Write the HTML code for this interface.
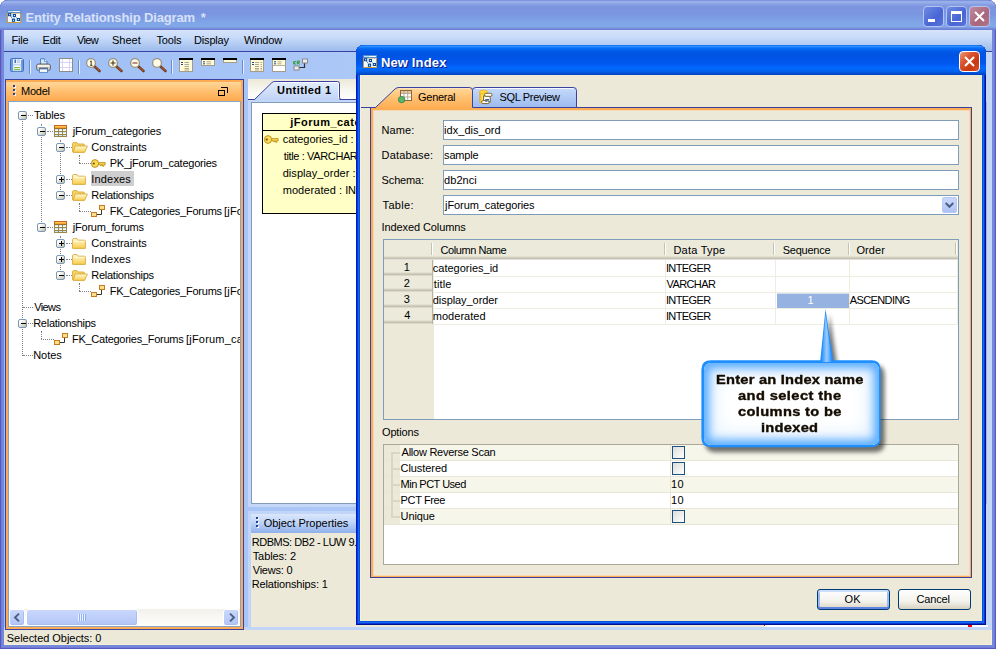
<!DOCTYPE html>
<html><head><meta charset="utf-8"><title>Entity Relationship Diagram</title>
<style>
*{box-sizing:border-box;margin:0;padding:0}
html,body{width:996px;height:649px;overflow:hidden;background:#fff}
body{font-family:"Liberation Sans",sans-serif;font-size:11px;color:#000;position:relative}
.a{position:absolute}
.t{position:absolute;white-space:nowrap;line-height:14px;height:14px;transform-origin:0 0}
svg{position:absolute;overflow:visible}
#win{left:0;top:0;width:996px;height:649px;background:#6E88DC;border-radius:8px 8px 0 0;overflow:hidden;box-shadow:inset 0 0 0 1px #5359C1,inset 0 0 0 2px #7579D3,inset 0 0 0 3px #7789DC}
#title{left:0;top:0;width:996px;height:30px;background:linear-gradient(#6A82D6 0,#90A8E8 1px,#9DB3EA 2px,#8AA2E4 4px,#7C94DF 7px,#7A96E0 14px,#7EA0E5 20px,#82AAEA 26px,#7B98E0 28px,#6E80D4 29px,#6E80D4 30px)}
#menubar{left:4px;top:30px;width:988px;height:21px;background:linear-gradient(#D6E4FB,#C5D9F8 40%,#9DBBED)}
#menuline{left:4px;top:51px;width:988px;height:1px;background:#3A41A2}
#client{left:4px;top:52px;width:988px;height:578px;background:linear-gradient(90deg,#9EBEF5,#C4DAFA)}
#status{left:4px;top:630px;width:988px;height:15px;background:#ECE9D8;border-right:1px solid #F7F1D9;border-bottom:1px solid #F7F1D9}
.cb{width:21px;height:21px;top:6px;border-radius:4px;border:1px solid #B5C4EE}
.sep{width:2px;height:14px;top:60px;border-left:1px solid #6A8CCB;border-right:1px solid #E4EEFC}
.inp{height:20px;background:#fff;border:1px solid #7F9DB9}
.exp{width:9px;height:9px;border:1px solid #7898B5;border-radius:2px;background:linear-gradient(135deg,#fff 20%,#C3BAAA)}
.exp i{position:absolute;left:2px;top:3px;width:5px;height:1px;background:#000}
.exp b{position:absolute;left:4px;top:1px;width:1px;height:5px;background:#000}
.dh{border-top:1px dotted #808080;height:0}
.dv{border-left:1px dotted #808080;width:0}
.sb{height:17px;border:1px solid #fff;border-radius:3px;background:linear-gradient(#C9D7FC,#BDCEF9 55%,#B1C5F5);box-shadow:inset -1px -1px 0 #A9BDEE}
.chk{width:13px;height:13px;border:1px solid #1C5180;background:linear-gradient(135deg,#DCDCD7,#fff)}
.btn{height:21px;border:1px solid #003C74;border-radius:3px;background:linear-gradient(#fff,#F3F2EC 60%,#D8D2C0)}
</style></head><body>
<div id="win" class="a">
<div id="title" class="a"></div>
<div id="menubar" class="a"></div>
<div id="menuline" class="a"></div>
<div id="client" class="a"></div>
<div id="status" class="a"></div>
<div class="a" style="left:4px;top:627px;width:988px;height:3px;background:#C4D7F8"></div>
<!-- app icon -->
<svg style="left:7px;top:10px" width="14" height="13" viewBox="0 0 14 13"><rect x=".5" y="3" width="13" height="9.5" fill="#F2F9FF" stroke="#C89A3A"/><rect x="0" y="0" width="14" height="3" fill="#5B8FD0"/><rect x="1" y="1" width="12" height="1" fill="#BFE3F8"/><rect x="6" y="1" width="7" height="1" fill="#F4FAFE"/><path d="M2.5 4.5 L6.5 10.4 M7.4 5.5 L11.4 9.5 M6.5 10.4 L7.4 5.5" stroke="#0A4A9A" stroke-width=".9" stroke-dasharray="1 .7" fill="none"/><g fill="#0A4A9A"><rect x="1" y="3.2" width="3.2" height="3"/><rect x="5.8" y="4" width="3.2" height="3"/><rect x="4.9" y="8.8" width="3.2" height="3"/><rect x="9.8" y="8" width="3.2" height="3"/></g><g fill="#fff"><rect x="2.1" y="4.2" width="1" height="1"/><rect x="6.9" y="5" width="1" height="1"/><rect x="6" y="9.8" width="1" height="1"/><rect x="10.9" y="9" width="1" height="1"/></g></svg>
<!-- caption buttons -->
<div class="a cb" style="left:923px;background:linear-gradient(135deg,#6F8BE4,#4866D4 60%,#5874DC)"><div class="a" style="left:4px;top:12px;width:7px;height:3px;background:#fff"></div></div>
<div class="a cb" style="left:946px;background:linear-gradient(135deg,#6F8BE4,#4866D4 60%,#5874DC)"><div class="a" style="left:4px;top:4px;width:11px;height:11px;border:1px solid #fff;border-top-width:3px"></div></div>
<div class="a cb" style="left:969px;background:linear-gradient(135deg,#C08A9C,#A9667C 60%,#B27488)"><svg style="left:4px;top:4px" width="11" height="11" viewBox="0 0 11 11"><path d="M1 1 L10 10 M10 1 L1 10" stroke="#fff" stroke-width="2"/></svg></div>
<div class="t" style="left:25.4px;top:11px;letter-spacing:-0.14px;font-size:13px;font-weight:bold;color:#D8E1F8;">Entity Relationship Diagram</div>
<div class="t" style="left:200.7px;top:11px;font-size:13px;font-weight:bold;color:#D8E1F8;">*</div>
<div class="t" style="left:11.5px;top:33px;letter-spacing:-0.17px;">File</div>
<div class="t" style="left:42.6px;top:33px;letter-spacing:-0.27px;">Edit</div>
<div class="t" style="left:76.9px;top:33px;letter-spacing:-0.60px;">View</div>
<div class="t" style="left:112.0px;top:33px;">Sheet</div>
<div class="t" style="left:156.5px;top:33px;letter-spacing:-0.20px;">Tools</div>
<div class="t" style="left:194.0px;top:33px;letter-spacing:-0.17px;">Display</div>
<div class="t" style="left:244.0px;top:33px;letter-spacing:-0.20px;">Window</div>
<div class="t" style="left:6.8px;top:631px;letter-spacing:-0.04px;">Selected Objects: 0</div>

<!-- toolbar icons -->
<svg style="left:10px;top:58px" width="14" height="14" viewBox="0 0 14 14"><path d="M.5 1.5 Q.5 .5 1.5 .5 H12 L13.5 2 V12.5 Q13.5 13.5 12.5 13.5 H1.5 Q.5 13.5 .5 12.5Z" fill="#DCE9FA" stroke="#3F6FC0"/><rect x="1" y="1" width="2" height="12" fill="#6C99DC"/><rect x="11" y="2" width="2" height="11" fill="#6C99DC"/><rect x="3" y="1" width="8" height="5" fill="#E8F0FC"/><rect x="4.5" y="1.5" width="1.5" height="3.5" fill="#3F6FC0"/><rect x="7" y="1.5" width="3" height="3.5" fill="#BFD1EE"/><rect x="3" y="7" width="8" height="6" fill="#fff" stroke="#8FB0E4" stroke-width=".6"/><rect x="4" y="9" width="6" height="1.2" fill="#7DBB4C"/><rect x="4" y="11" width="6" height="1.2" fill="#7DBB4C"/></svg>
<div class="a sep" style="left:29px"></div>
<svg style="left:36px;top:58px" width="15" height="15" viewBox="0 0 15 15"><path d="M4.5 6.5 V.8 H8.5 L11 3.5 V6.5Z" fill="#D6E6F8" stroke="#3E78C4" stroke-width=".9"/><path d="M8.5 .8 V3.5 H11" fill="#fff" stroke="#3E78C4" stroke-width=".7"/><rect x=".6" y="6" width="13.8" height="6.5" rx="2" fill="#C9C9C9" stroke="#5A5A5A" stroke-width=".9"/><rect x="1.5" y="7" width="12" height="2" fill="#F2F2F2"/><rect x="3" y="9.5" width="9" height="2.2" fill="#6E6E6E"/><rect x="3.5" y="11" width="8" height="3.3" fill="#fff" stroke="#3E78C4" stroke-width=".8"/></svg>
<svg style="left:59px;top:58px" width="14" height="14" viewBox="0 0 14 14"><rect x=".5" y=".5" width="13" height="13" fill="#fff" stroke="#8C8C8C"/><path d="M3.5 1 V13 M10.5 1 V13 M1 4.5 H13 M1 9.5 H13" stroke="#D6D2F8" stroke-width="1"/></svg>
<div class="a sep" style="left:78px"></div>
<svg style="left:85px;top:57px" width="18" height="17" viewBox="0 0 18 17"><g id="mag"><path d="M9.5 9.5 L14.5 14" stroke="#6B3A1E" stroke-width="2.6" stroke-linecap="round"/><path d="M10.5 10.4 L14.3 13.8" stroke="#C86A3A" stroke-width="1.3" stroke-dasharray="1 .6"/><circle cx="6" cy="6" r="4.4" fill="#FFFBE6" stroke="#98917E" stroke-width="1.3"/></g><path d="M5 4.8 L6.2 3.8 V8.3 M5 8.3 H7.4" stroke="#4A3B1E" stroke-width="1" fill="none"/></svg>
<svg style="left:107px;top:57px" width="18" height="17" viewBox="0 0 18 17"><use href="#mag"/><path d="M3.5 6 H8.5 M6 3.5 V8.5" stroke="#4A3B1E" stroke-width="1.2"/></svg>
<svg style="left:129px;top:57px" width="18" height="17" viewBox="0 0 18 17"><use href="#mag"/><path d="M3.5 6 H8.5" stroke="#7A2B2B" stroke-width="1.2"/></svg>
<svg style="left:151px;top:57px" width="18" height="17" viewBox="0 0 18 17"><use href="#mag"/></svg>
<div class="a sep" style="left:171px"></div>
<svg style="left:179px;top:58px" width="14" height="14" viewBox="0 0 14 14"><rect x=".5" y="1.5" width="13" height="12" fill="#FFFBD6" stroke="#A39C8B"/><rect x="0" y="0" width="14" height="2" fill="#000"/><path d="M2 4.5 H4 M2 6.5 H4" stroke="#1E4AA0"/><path d="M5.5 4.5 H10 M5.5 6.5 H10 M5.5 8.5 H10 M5.5 10.5 H10 M5.5 12 H10" stroke="#9A927A" stroke-width=".8"/></svg>
<svg style="left:201px;top:58px" width="14" height="8" viewBox="0 0 14 8"><rect x=".5" y="1.5" width="13" height="6" fill="#FFFBD6" stroke="#A39C8B"/><rect x="0" y="0" width="14" height="2" fill="#000"/><path d="M2 3.8 H4 M2 5.8 H4" stroke="#1E4AA0"/><path d="M5.5 3.8 H10 M5.5 5.8 H10" stroke="#9A927A" stroke-width=".8"/></svg>
<svg style="left:223px;top:58px" width="14" height="5" viewBox="0 0 14 5"><rect x=".5" y="1.5" width="13" height="3" fill="#FFFBD6" stroke="#A39C8B"/><rect x="0" y="0" width="14" height="2" fill="#000"/></svg>
<div class="a sep" style="left:242px"></div>
<svg style="left:250px;top:58px" width="14" height="14" viewBox="0 0 14 14"><rect x=".5" y="1.5" width="13" height="12" fill="#FFFBD6" stroke="#A39C8B"/><rect x="0" y="0" width="14" height="2" fill="#000"/><path d="M2 4.5 H4 M2 6.5 H4" stroke="#1E4AA0"/><path d="M5 4.5 H9 M5 6.5 H9 M5 8.5 H9 M5 10.5 H9 M5 12 H9 M10.5 4.5 H12 M10.5 6.5 H12 M10.5 8.5 H12 M10.5 10.5 H12 M10.5 12 H12" stroke="#9A927A" stroke-width=".8"/></svg>
<svg style="left:272px;top:58px" width="14" height="14" viewBox="0 0 14 14"><rect x=".5" y="1.5" width="13" height="12" fill="#fff" stroke="#A39C8B"/><rect x="1" y="2" width="12" height="5.5" fill="#FFFBD6"/><path d="M1 7.5 H13" stroke="#A39C8B" stroke-width=".8"/><rect x="0" y="0" width="14" height="2" fill="#000"/><path d="M2 3.8 H4 M2 5.8 H4" stroke="#1E4AA0"/><path d="M5.5 3.8 H9.5 M5.5 5.8 H9.5" stroke="#9A927A" stroke-width=".8"/></svg>
<svg style="left:293px;top:58px" width="16" height="13" viewBox="0 0 16 13"><path d="M4 9.5 H11.5 V4" stroke="#333" stroke-width="1.2" fill="none"/><rect x="9.5" y="1" width="5" height="4" fill="#ECECEC" stroke="#8A8A8A"/><rect x="1" y="8" width="5" height="4" fill="#ECECEC" stroke="#8A8A8A"/><path d="M.8 3 V6.5 M.8 4.8 L3 3 M.8 4.8 L3 6.5 M4.3 6.5 V3 H6.3 V4.7 H4.3 M5.3 4.7 L6.5 6.5" stroke="#2E9A2E" stroke-width="1" fill="none"/></svg>

<!-- model panel -->
<div class="a" style="left:5px;top:79px;width:239px;height:551px;background:#FDAB52;border:1px solid #3A41A2"></div>
<div class="a" style="left:6px;top:82px;width:235px;height:19px;background:linear-gradient(#FFD798,#FFC173 45%,#FFA94E)"></div>
<div class="a" style="left:8px;top:101px;width:233px;height:526px;background:#fff;border:1px solid #86A4C6"></div>
<div class="a" style="left:14px;top:86px;width:2px;height:2px;background:#fff;opacity:.85"></div><div class="a" style="left:13px;top:85px;width:2px;height:2px;background:#27438F"></div>
<div class="a" style="left:14px;top:90px;width:2px;height:2px;background:#fff;opacity:.85"></div><div class="a" style="left:13px;top:89px;width:2px;height:2px;background:#27438F"></div>
<div class="a" style="left:14px;top:94px;width:2px;height:2px;background:#fff;opacity:.85"></div><div class="a" style="left:13px;top:93px;width:2px;height:2px;background:#27438F"></div>
<svg style="left:218px;top:87px" width="11" height="10" viewBox="0 0 11 10"><path d="M3 .5 H9.5 V6" stroke="#000" fill="none"/><rect x=".5" y="3.5" width="6" height="5" fill="none" stroke="#000"/></svg>
<div class="t" style="left:21.0px;top:84px;letter-spacing:-0.25px;">Model</div>
<svg width="0" height="0"><defs>
<linearGradient id="gf" x1="0" y1="0" x2="0" y2="1"><stop offset="0" stop-color="#FFFBDA"/><stop offset="1" stop-color="#F6CC4C"/></linearGradient>
<symbol id="i-table" viewBox="0 0 13 12"><rect x="0" y="0" width="13" height="12" fill="#9A8648"/><rect x="0" y="0" width="13" height="1" fill="#C4661E"/><rect x="0" y="1" width="1" height="3" fill="#B06A22"/><rect x="12" y="1" width="1" height="3" fill="#B06A22"/><rect x="1" y="1" width="11" height="2" fill="#F6A530"/><rect x="1" y="1" width="11" height="1" fill="#FFC455"/><rect x="1" y="3" width="11" height="1" fill="#A8701E"/><rect x="1" y="4" width="3" height="2" fill="#fff"/><rect x="1" y="4" width="3" height="1" fill="#CFE8FA"/><rect x="1" y="7" width="3" height="2" fill="#fff"/><rect x="1" y="7" width="3" height="1" fill="#CFE8FA"/><rect x="1" y="10" width="3" height="1" fill="#fff"/><rect x="1" y="10" width="3" height="1" fill="#CFE8FA"/><rect x="5" y="4" width="3" height="2" fill="#fff"/><rect x="5" y="4" width="3" height="1" fill="#CFE8FA"/><rect x="5" y="7" width="3" height="2" fill="#fff"/><rect x="5" y="7" width="3" height="1" fill="#CFE8FA"/><rect x="5" y="10" width="3" height="1" fill="#fff"/><rect x="5" y="10" width="3" height="1" fill="#CFE8FA"/><rect x="9" y="4" width="3" height="2" fill="#fff"/><rect x="9" y="4" width="3" height="1" fill="#CFE8FA"/><rect x="9" y="7" width="3" height="2" fill="#fff"/><rect x="9" y="7" width="3" height="1" fill="#CFE8FA"/><rect x="9" y="10" width="3" height="1" fill="#fff"/><rect x="9" y="10" width="3" height="1" fill="#CFE8FA"/></symbol>
<symbol id="i-fopen" viewBox="0 0 16 11"><path d="M.6 10 V1.6 Q.6 .6 1.6 .6 H5 L6.2 2 H11.4 Q12.4 2 12.4 3 V4" fill="#F5D264" stroke="#D9A93A" stroke-width=".9"/><path d="M1 10.4 L3.4 4 H15.4 L12.6 10.4Z" fill="url(#gf)" stroke="#D9A93A" stroke-width=".9"/></symbol>
<symbol id="i-fclosed" viewBox="0 0 14 11"><path d="M.6 10.4 V1.6 Q.6 .6 1.6 .6 H5 L6.2 2.2 H12.4 Q13.4 2.2 13.4 3.2 V10.4Z" fill="url(#gf)" stroke="#D9A93A" stroke-width=".9"/><path d="M1.2 3.3 H12.8" stroke="#FFFBDA" stroke-width=".9"/></symbol>
<symbol id="i-key" viewBox="0 0 15 9"><path d="M6 3.6 H14.2 V5.6 H13 V7.2 H11.4 V5.6 H10.4 V6.6 H9 V5.6 H6Z" fill="#F7D54A" stroke="#B88A18" stroke-width=".8"/><ellipse cx="4" cy="4.5" rx="3.6" ry="3.9" fill="#F9DC5A" stroke="#B88A18" stroke-width=".9"/><circle cx="2.8" cy="4.5" r="1.1" fill="#6B4A10"/></symbol>
<symbol id="i-fk" viewBox="0 0 15 12"><path d="M5 9.5 H10.5 V4" stroke="#333" stroke-width="1" fill="none"/><rect x="8.5" y=".5" width="5" height="4" fill="#FFE08A" stroke="#C87A1E"/><rect x=".5" y="7.5" width="5" height="4" fill="#FFE08A" stroke="#C87A1E"/></symbol>
</defs></svg>

<div class="a" style="left:0;top:0;width:240px;height:609px;overflow:hidden">
<div class="a" style="left:91px;top:171px;width:43px;height:15px;background:#CFCFCF"></div>
<div class="a dv" style="left:22px;top:121px;height:235px"></div>
<div class="a dh" style="left:28px;top:115px;width:5px"></div>
<div class="a dh" style="left:28px;top:323px;width:5px"></div>
<div class="a dh" style="left:23px;top:307px;width:10px"></div>
<div class="a dh" style="left:23px;top:355px;width:10px"></div>
<div class="a dv" style="left:41px;top:124px;height:104px"></div>
<div class="a dh" style="left:47px;top:131px;width:6px"></div>
<div class="a dh" style="left:47px;top:227px;width:6px"></div>
<div class="a dv" style="left:60px;top:140px;height:56px"></div>
<div class="a dv" style="left:60px;top:236px;height:40px"></div>
<div class="a dh" style="left:66px;top:147px;width:6px"></div>
<div class="a dh" style="left:66px;top:179px;width:6px"></div>
<div class="a dh" style="left:66px;top:195px;width:6px"></div>
<div class="a dh" style="left:66px;top:243px;width:6px"></div>
<div class="a dh" style="left:66px;top:259px;width:6px"></div>
<div class="a dh" style="left:66px;top:275px;width:6px"></div>
<div class="a dv" style="left:79px;top:155px;height:8px"></div>
<div class="a dh" style="left:79px;top:163px;width:12px"></div>
<div class="a dv" style="left:79px;top:203px;height:8px"></div>
<div class="a dh" style="left:79px;top:211px;width:12px"></div>
<div class="a dv" style="left:79px;top:283px;height:8px"></div>
<div class="a dh" style="left:79px;top:291px;width:12px"></div>
<div class="a dv" style="left:41px;top:331px;height:8px"></div>
<div class="a dh" style="left:41px;top:339px;width:13px"></div>
<div class="a exp" style="left:18px;top:111px"><i></i></div>
<div class="a exp" style="left:18px;top:319px"><i></i></div>
<div class="a exp" style="left:37px;top:127px"><i></i></div>
<div class="a exp" style="left:37px;top:223px"><i></i></div>
<div class="a exp" style="left:56px;top:143px"><i></i></div>
<div class="a exp" style="left:56px;top:175px"><i></i><b></b></div>
<div class="a exp" style="left:56px;top:191px"><i></i></div>
<div class="a exp" style="left:56px;top:239px"><i></i><b></b></div>
<div class="a exp" style="left:56px;top:255px"><i></i><b></b></div>
<div class="a exp" style="left:56px;top:271px"><i></i></div>
<svg style="left:54px;top:125px" width="13" height="12"><use href="#i-table" width="13" height="12"/></svg>
<svg style="left:54px;top:221px" width="13" height="12"><use href="#i-table" width="13" height="12"/></svg>
<svg style="left:72px;top:142px" width="16" height="11"><use href="#i-fopen" width="16" height="11"/></svg>
<svg style="left:72px;top:190px" width="16" height="11"><use href="#i-fopen" width="16" height="11"/></svg>
<svg style="left:72px;top:270px" width="16" height="11"><use href="#i-fopen" width="16" height="11"/></svg>
<svg style="left:72px;top:174px" width="14" height="11"><use href="#i-fclosed" width="14" height="11"/></svg>
<svg style="left:72px;top:238px" width="14" height="11"><use href="#i-fclosed" width="14" height="11"/></svg>
<svg style="left:72px;top:254px" width="14" height="11"><use href="#i-fclosed" width="14" height="11"/></svg>
<svg style="left:91px;top:159px" width="15" height="9"><use href="#i-key" width="15" height="9"/></svg>
<svg style="left:91px;top:205px" width="15" height="12"><use href="#i-fk" width="15" height="12"/></svg>
<svg style="left:91px;top:285px" width="15" height="12"><use href="#i-fk" width="15" height="12"/></svg>
<svg style="left:54px;top:333px" width="15" height="12"><use href="#i-fk" width="15" height="12"/></svg>
<div class="t" style="left:33.9px;top:108px;letter-spacing:-0.12px;">Tables</div>
<div class="t" style="left:72.8px;top:124px;letter-spacing:-0.17px;">jForum_categories</div>
<div class="t" style="left:91.3px;top:140px;letter-spacing:-0.02px;">Constraints</div>
<div class="t" style="left:109.7px;top:156px;letter-spacing:-0.24px;">PK_jForum_categories</div>
<div class="t" style="left:91.3px;top:172px;letter-spacing:0.17px;">Indexes</div>
<div class="t" style="left:91.3px;top:188px;letter-spacing:-0.27px;">Relationships</div>
<div class="t" style="left:109.7px;top:204px;letter-spacing:-0.23px;">FK_Categories_Forums</div>
<div class="t" style="left:224.0px;top:204px;letter-spacing:0.20px;">[jForum_categories]</div>
<div class="t" style="left:72.8px;top:220px;letter-spacing:-0.23px;">jForum_forums</div>
<div class="t" style="left:91.3px;top:236px;letter-spacing:-0.02px;">Constraints</div>
<div class="t" style="left:91.3px;top:252px;letter-spacing:0.17px;">Indexes</div>
<div class="t" style="left:91.3px;top:268px;letter-spacing:-0.27px;">Relationships</div>
<div class="t" style="left:109.7px;top:284px;letter-spacing:-0.23px;">FK_Categories_Forums</div>
<div class="t" style="left:224.0px;top:284px;letter-spacing:0.20px;">[jForum_categories]</div>
<div class="t" style="left:34.2px;top:300px;letter-spacing:-0.60px;">Views</div>
<div class="t" style="left:33.2px;top:316px;letter-spacing:-0.26px;">Relationships</div>
<div class="t" style="left:72.0px;top:332px;letter-spacing:-0.27px;">FK_Categories_Forums</div>
<div class="t" style="left:186.0px;top:332px;letter-spacing:0.20px;">[jForum_categories]</div>
<div class="t" style="left:33.2px;top:348px;letter-spacing:-0.05px;">Notes</div>
</div>
<div class="a" style="left:9px;top:609px;width:231px;height:17px;background:linear-gradient(#F3F1EC,#FEFEFB)"></div>
<div class="a sb" style="left:9px;top:609px;width:16px"><svg style="left:3px;top:3px" width="8" height="9" viewBox="0 0 8 9"><path d="M6 .6 L2 4.5 L6 8.4" stroke="#4D6185" stroke-width="2" fill="none"/></svg></div>
<div class="a sb" style="left:223px;top:609px;width:16px"><svg style="left:4px;top:3px" width="8" height="9" viewBox="0 0 8 9"><path d="M2 .6 L6 4.5 L2 8.4" stroke="#4D6185" stroke-width="2" fill="none"/></svg></div>
<div class="a sb" style="left:26px;top:609px;width:112px"><div class="a" style="left:51px;top:4px;width:8px;height:7px;background:repeating-linear-gradient(90deg,#EEF4FE 0,#EEF4FE 1px,#8CB0F8 1px,#8CB0F8 2px)"></div></div>

<!-- tab strip + canvas -->
<div class="a" style="left:248px;top:79px;width:744px;height:21px;background:linear-gradient(#ECE9D8,#F7F6EF 50%,#fff)"></div>
<div class="a" style="left:248px;top:99px;width:744px;height:1px;background:#3A41A2"></div>
<div class="a" style="left:248px;top:100px;width:744px;height:407px;background:#C4D7F8"></div>
<svg style="left:248px;top:79px" width="100" height="22" viewBox="0 0 100 22"><defs><linearGradient id="gt" x1="0" y1="0" x2="0" y2="1"><stop offset="0" stop-color="#E4EDFC"/><stop offset="1" stop-color="#BFD3F7"/></linearGradient></defs><path d="M6.5 21 L6.5 20.5 L24 3.5 Q25 2.5 27 2.5 H89.5 Q91.5 2.5 91.5 4.5 V21Z" fill="url(#gt)"/><path d="M26 3.5 H89.5 Q90.5 3.5 90.5 4.5 V19.5" fill="none" stroke="#fff" opacity=".85"/><path d="M0 20.5 H6.5 L24 3.5 Q25 2.5 27 2.5 H89.5 Q91.5 2.5 91.5 4.5 V18.5 Q91.5 20.5 93.5 20.5 H100" fill="none" stroke="#3A41A2"/></svg>
<div class="a" style="left:251px;top:102px;width:741px;height:402px;background:#fff;border:1px solid #7F9DB9"></div>
<!-- entity -->
<div class="a" style="left:262px;top:113px;width:200px;height:101px;background:#FFFFC6;border:1px solid #000"></div>
<div class="a" style="left:262px;top:130px;width:200px;height:1px;background:#000"></div>
<svg style="left:264px;top:135px" width="15" height="9"><use href="#i-key" width="15" height="9"/></svg>
<div class="t" style="left:277.0px;top:83px;letter-spacing:0.44px;font-weight:bold;">Untitled 1</div>
<div class="t" style="left:290.3px;top:115px;letter-spacing:0.47px;font-weight:bold;">jForum_cat</div>
<div class="t" style="left:354.4px;top:115px;letter-spacing:0.60px;font-weight:bold;">egories</div>
<div class="t" style="left:282.7px;top:132px;letter-spacing:-0.04px;">categories_id :</div>
<div class="t" style="left:283.7px;top:149px;letter-spacing:-0.36px;">title : VARCHA</div>
<div class="t" style="left:349.8px;top:149px;">R(255)</div>
<div class="t" style="left:282.7px;top:166px;letter-spacing:0.06px;">display_order :</div>
<div class="t" style="left:282.7px;top:183px;letter-spacing:0.07px;">moderated : I</div>
<div class="t" style="left:348.0px;top:183px;">NTEGER</div>

<!-- object properties -->
<div class="a" style="left:248px;top:511px;width:744px;height:119px;background:#C1D5F8"></div>
<div class="a" style="left:251px;top:514px;width:741px;height:19px;background:linear-gradient(#DBE7FB,#C3D7F8 40%,#8FB0EA)"></div>
<div class="a" style="left:251px;top:533px;width:741px;height:94px;background:#ECE9D8"></div>
<div class="a" style="left:257px;top:518px;width:2px;height:2px;background:#fff"></div><div class="a" style="left:256px;top:517px;width:2px;height:2px;background:#27438F"></div>
<div class="a" style="left:257px;top:522px;width:2px;height:2px;background:#fff"></div><div class="a" style="left:256px;top:521px;width:2px;height:2px;background:#27438F"></div>
<div class="a" style="left:257px;top:526px;width:2px;height:2px;background:#fff"></div><div class="a" style="left:256px;top:525px;width:2px;height:2px;background:#27438F"></div>
<div class="t" style="left:263.7px;top:516px;letter-spacing:-0.02px;">Object Properties</div>
<div class="t" style="left:251.7px;top:535px;letter-spacing:-0.46px;">RDBMS: DB2 - LUW 9</div>
<div class="t" style="left:354.0px;top:535px;">.x</div>
<div class="t" style="left:252.7px;top:549px;letter-spacing:-0.09px;">Tables: 2</div>
<div class="t" style="left:252.7px;top:563px;letter-spacing:-0.20px;">Views: 0</div>
<div class="t" style="left:251.7px;top:577px;letter-spacing:-0.14px;">Relationships: 1</div>

<!-- dialog -->
<div class="a" style="left:986px;top:52px;width:6px;height:578px;background:#C4D7F8"></div>
<div class="a" style="left:986px;top:102px;width:1px;height:402px;background:#9DB5DC"></div>
<div class="a" style="left:764px;top:625px;width:224px;height:2px;background:#fff"></div>
<div class="a" style="left:764px;top:623px;width:1px;height:3px;background:#f00"></div><div class="a" style="left:968px;top:625px;width:4px;height:2px;background:#f00"></div>
<div class="a" style="left:356px;top:45px;width:630px;height:580px;background:#0553DD;border-radius:8px 8px 0 0;box-shadow:inset 1px 0 #0019CF,inset -1px 0 #00138C,inset 0 -1px #00138C,inset 2px 0 #0A35D9,inset -2px 0 #0A35D9,inset 0 -2px #0A35D9,inset 3px 0 #166AEE,inset -3px 0 #166AEE,inset 0 -3px #166AEE"></div>
<div class="a" style="left:356px;top:45px;width:630px;height:30px;border-radius:8px 8px 0 0;background:linear-gradient(#0058EE 0,#3593FF 1px,#1F86FF 2px,#0A6FFA 3px,#0262EE 5px,#0057E5 7px,#0054E3 9px,#0055EB 17px,#005BF5 20px,#026AFE 23px,#0062EF 26px,#0052D6 28px,#0040C0 30px)"></div>
<div class="a" style="left:360px;top:75px;width:622px;height:546px;background:#ECE9D8;border-left:1px solid #FAF0D5"></div>
<svg style="left:363px;top:55px" width="14" height="13" viewBox="0 0 14 13"><rect x=".5" y="3" width="13" height="9.5" fill="#F2F9FF" stroke="#C89A3A"/><rect x="0" y="0" width="14" height="3" fill="#5B8FD0"/><rect x="1" y="1" width="12" height="1" fill="#BFE3F8"/><rect x="6" y="1" width="7" height="1" fill="#F4FAFE"/><path d="M2.5 4.5 L6.5 10.4 M7.4 5.5 L11.4 9.5 M6.5 10.4 L7.4 5.5" stroke="#0A4A9A" stroke-width=".9" stroke-dasharray="1 .7" fill="none"/><g fill="#0A4A9A"><rect x="1" y="3.2" width="3.2" height="3"/><rect x="5.8" y="4" width="3.2" height="3"/><rect x="4.9" y="8.8" width="3.2" height="3"/><rect x="9.8" y="8" width="3.2" height="3"/></g><g fill="#fff"><rect x="2.1" y="4.2" width="1" height="1"/><rect x="6.9" y="5" width="1" height="1"/><rect x="6" y="9.8" width="1" height="1"/><rect x="10.9" y="9" width="1" height="1"/></g></svg>
<div class="a" style="left:959px;top:51px;width:21px;height:21px;border:1px solid #fff;border-radius:4px;background:linear-gradient(135deg,#EE9A78 0,#DA5530 35%,#C8380E 70%,#D9562E)"><svg style="left:4px;top:4px" width="11" height="11" viewBox="0 0 11 11"><path d="M1 1 L10 10 M10 1 L1 10" stroke="#fff" stroke-width="2"/></svg></div>
<div class="a" style="left:370px;top:107px;width:602px;height:471px;background:#FDAE55;border:1px solid #3B409C"></div>
<div class="a" style="left:373px;top:110px;width:597px;height:466px;background:#ECE9D8;border:1px solid #F6D8B4"></div>
<div class="a" style="left:361px;top:107px;width:10px;height:1px;background:#3A41A2"></div>
<svg style="left:370px;top:86px" width="210" height="23" viewBox="0 0 210 23"><defs><linearGradient id="go" x1="0" y1="0" x2="0" y2="1"><stop offset="0" stop-color="#FFD99E"/><stop offset=".5" stop-color="#FFC070"/><stop offset="1" stop-color="#FFAB52"/></linearGradient><linearGradient id="gb" x1="0" y1="0" x2="0" y2="1"><stop offset="0" stop-color="#C6DAFB"/><stop offset="1" stop-color="#9CBBEE"/></linearGradient></defs><path d="M102.5 21.5 V4.5 Q102.5 1.5 105.5 1.5 H203.5 Q206.5 1.5 206.5 4.5 V21.5Z" fill="url(#gb)" stroke="#3A41A2"/><path d="M5 23 L5.5 21.5 L25 3 Q26.5 1.5 29 1.5 H99.5 Q102.5 1.5 102.5 4.5 V23Z" fill="url(#go)"/><path d="M106 2.5 H203.5" stroke="#fff" opacity=".8"/><path d="M28 2.5 H100" stroke="#FFE7C2" opacity=".9"/><path d="M0 21.5 H5.5 L25 3 Q26.5 1.5 29 1.5 H99.5 Q102.5 1.5 102.5 4.5 V21.5" fill="none" stroke="#3A41A2"/></svg>
<svg style="left:398px;top:90px" width="15" height="14" viewBox="0 0 15 14"><rect x="2.5" y=".5" width="11" height="10" fill="#fff" stroke="#8A6A3A"/><rect x="3" y="1" width="10" height="2" fill="#E9C9A0"/><path d="M6 1 V10.5 M9.7 1 V10.5 M3 3.5 H13 M3 7 H13" stroke="#A89A80" stroke-width=".8"/><circle cx="3.6" cy="9.6" r="3.2" fill="#5DB56A" stroke="#2F8A4A" stroke-width=".9"/></svg>
<svg style="left:479px;top:90px" width="14" height="14" viewBox="0 0 14 14"><defs><linearGradient id="gc" x1="0" y1="0" x2="1" y2="0"><stop offset="0" stop-color="#E8A010"/><stop offset=".35" stop-color="#FFE85A"/><stop offset="1" stop-color="#F3AE1C"/></linearGradient></defs><path d="M.4 2 V12 Q.4 13.7 4.5 13.7 Q8.6 13.7 8.6 12 V2Z" fill="url(#gc)"/><ellipse cx="4.5" cy="2" rx="4.1" ry="1.9" fill="#FFD63A" stroke="#EBAA1A" stroke-width=".6"/><rect x="4.6" y="6" width="6.6" height="6" fill="#fff" stroke="#6B5A1E" stroke-width=".9"/><rect x="5.6" y="3.3" width="7.4" height="3" rx="1.3" fill="#fff" stroke="#6B5A1E" stroke-width=".9"/><rect x="2.6" y="10.6" width="7.6" height="3" rx="1.3" fill="#fff" stroke="#6B5A1E" stroke-width=".9"/><path d="M6.3 9.5 H10 M6.3 11.3 H8.4 M9.3 11.3 H10" stroke="#3A62B0" stroke-width="1.1"/></svg>
<div class="a inp" style="left:443px;top:120px;width:516px"></div>
<div class="a inp" style="left:443px;top:145px;width:516px"></div>
<div class="a inp" style="left:443px;top:170px;width:516px"></div>
<div class="a inp" style="left:443px;top:195px;width:516px"></div>
<div class="a" style="left:942px;top:197px;width:15px;height:16px;border-radius:2px;background:linear-gradient(#C9D7FC,#BCCDF8 60%,#ADC1F3);border:1px solid #B9C9F5"><svg style="left:2px;top:4px" width="9" height="7" viewBox="0 0 9 7"><path d="M.7 1 L4.5 4.8 L8.3 1" stroke="#4D6185" stroke-width="2" fill="none"/></svg></div>
<div class="a" style="left:383px;top:239px;width:576px;height:181px;background:#fff;border:1px solid #7F9DB9"></div>
<div class="a" style="left:384px;top:240px;width:574px;height:20px;background:linear-gradient(#EBEADB 0,#EBEADB 16px,#DAD6C5 17px,#CBC7B8 18px,#C1BDAE 19px,#fff 20px)"></div>
<div class="a" style="left:384px;top:260px;width:50px;height:159px;background:#ECE9D8"></div>
<div class="a" style="left:431px;top:243px;width:2px;height:12px;border-left:1px solid #C5C2B2;border-right:1px solid #fff"></div>
<div class="a" style="left:664px;top:243px;width:2px;height:12px;border-left:1px solid #C5C2B2;border-right:1px solid #fff"></div>
<div class="a" style="left:773px;top:243px;width:2px;height:12px;border-left:1px solid #C5C2B2;border-right:1px solid #fff"></div>
<div class="a" style="left:848px;top:243px;width:2px;height:12px;border-left:1px solid #C5C2B2;border-right:1px solid #fff"></div>
<div class="a" style="left:955px;top:243px;width:2px;height:12px;border-left:1px solid #C5C2B2;border-right:1px solid #fff"></div>
<div class="a" style="left:384px;top:260px;width:49px;height:16px;border-right:1px solid #B8B4A4;background:linear-gradient(#EBEADB 0,#EBEADB 12px,#DAD6C5 13px,#CBC7B8 14px,#C1BDAE 15px,#F4F3EA 16px)"></div>
<div class="a" style="left:433px;top:276px;width:525px;height:1px;background:#EFEDE0"></div>
<div class="a" style="left:384px;top:276px;width:49px;height:16px;border-right:1px solid #B8B4A4;background:linear-gradient(#EBEADB 0,#EBEADB 12px,#DAD6C5 13px,#CBC7B8 14px,#C1BDAE 15px,#F4F3EA 16px)"></div>
<div class="a" style="left:433px;top:292px;width:525px;height:1px;background:#EFEDE0"></div>
<div class="a" style="left:384px;top:292px;width:49px;height:16px;border-right:1px solid #B8B4A4;background:linear-gradient(#EBEADB 0,#EBEADB 12px,#DAD6C5 13px,#CBC7B8 14px,#C1BDAE 15px,#F4F3EA 16px)"></div>
<div class="a" style="left:433px;top:308px;width:525px;height:1px;background:#EFEDE0"></div>
<div class="a" style="left:384px;top:308px;width:49px;height:16px;border-right:1px solid #B8B4A4;background:linear-gradient(#EBEADB 0,#EBEADB 12px,#DAD6C5 13px,#CBC7B8 14px,#C1BDAE 15px,#F4F3EA 16px)"></div>
<div class="a" style="left:433px;top:324px;width:525px;height:1px;background:#EFEDE0"></div>
<div class="a" style="left:433px;top:260px;width:1px;height:65px;background:#EFEDE0"></div>
<div class="a" style="left:665px;top:260px;width:1px;height:65px;background:#EFEDE0"></div>
<div class="a" style="left:775px;top:260px;width:1px;height:65px;background:#EFEDE0"></div>
<div class="a" style="left:849px;top:260px;width:1px;height:65px;background:#EFEDE0"></div>
<div class="a" style="left:957px;top:260px;width:1px;height:65px;background:#EFEDE0"></div>
<div class="a" style="left:777px;top:293px;width:72px;height:15px;background:#96B2E0;border-top:1px solid #D3DEF3"></div>
<div class="a" style="left:383px;top:444px;width:576px;height:121px;background:#fff;border:1px solid #ACA899"></div>
<div class="a" style="left:384px;top:445px;width:16px;height:80px;background:#ECE9D8"></div>
<div class="a" style="left:400px;top:445px;width:558px;height:15px;background:#F7F6EB"></div>
<div class="a" style="left:384px;top:460px;width:574px;height:1px;background:#E9E6D8"></div>
<div class="a" style="left:391px;top:452px;width:9px;height:2px;background:#D9D6C8"></div>
<div class="a" style="left:384px;top:476px;width:574px;height:1px;background:#E9E6D8"></div>
<div class="a" style="left:391px;top:468px;width:9px;height:2px;background:#D9D6C8"></div>
<div class="a" style="left:400px;top:477px;width:558px;height:15px;background:#F7F6EB"></div>
<div class="a" style="left:384px;top:492px;width:574px;height:1px;background:#E9E6D8"></div>
<div class="a" style="left:391px;top:484px;width:9px;height:2px;background:#D9D6C8"></div>
<div class="a" style="left:384px;top:508px;width:574px;height:1px;background:#E9E6D8"></div>
<div class="a" style="left:391px;top:500px;width:9px;height:2px;background:#D9D6C8"></div>
<div class="a" style="left:400px;top:509px;width:558px;height:15px;background:#F7F6EB"></div>
<div class="a" style="left:384px;top:524px;width:574px;height:1px;background:#E9E6D8"></div>
<div class="a" style="left:391px;top:516px;width:9px;height:2px;background:#D9D6C8"></div>
<div class="a" style="left:391px;top:452px;width:2px;height:66px;background:#D9D6C8"></div>
<div class="a" style="left:670px;top:445px;width:1px;height:80px;background:#E9E6D8"></div>
<div class="a chk" style="left:672px;top:446px"></div>
<div class="a chk" style="left:672px;top:462px"></div>
<div class="a chk" style="left:672px;top:510px"></div>
<div class="a btn" style="left:817px;top:589px;width:73px;box-shadow:inset 0 -2px 0 #5F83DE,inset 0 2px 0 #CBDFFB,inset 2px 0 0 #9CBBEC,inset -2px 0 0 #9CBBEC"></div>
<div class="a btn" style="left:898px;top:589px;width:73px"></div>
<div class="t" style="left:380.9px;top:56px;letter-spacing:0.15px;font-size:13px;font-weight:bold;color:#fff;text-shadow:1px 1px 0 #0A1883;">New Index</div>
<div class="t" style="left:418.0px;top:90px;letter-spacing:-0.27px;">General</div>
<div class="t" style="left:499.5px;top:90px;letter-spacing:-0.33px;">SQL Preview</div>
<div class="t" style="left:381.6px;top:123px;letter-spacing:0.07px;">Name:</div>
<div class="t" style="left:381.6px;top:148px;letter-spacing:0.17px;">Database:</div>
<div class="t" style="left:381.6px;top:173px;letter-spacing:-0.15px;">Schema:</div>
<div class="t" style="left:382.6px;top:198px;letter-spacing:0.32px;">Table:</div>
<div class="t" style="left:444.1px;top:123px;letter-spacing:0.03px;">idx_dis_ord</div>
<div class="t" style="left:444.1px;top:148px;letter-spacing:-0.18px;">sample</div>
<div class="t" style="left:444.1px;top:173px;letter-spacing:0.04px;">db2nci</div>
<div class="t" style="left:445.1px;top:198px;letter-spacing:-0.10px;">jForum_categories</div>
<div class="t" style="left:381.6px;top:220px;letter-spacing:-0.10px;">Indexed Columns</div>
<div class="t" style="left:440.6px;top:243px;letter-spacing:-0.44px;">Column Name</div>
<div class="t" style="left:673.4px;top:243px;letter-spacing:0.23px;">Data Type</div>
<div class="t" style="left:782.7px;top:243px;letter-spacing:-0.24px;">Sequence</div>
<div class="t" style="left:856.4px;top:243px;letter-spacing:0.08px;">Order</div>
<div class="t" style="left:403.8px;top:260px;">1</div>
<div class="t" style="left:403.8px;top:276px;">2</div>
<div class="t" style="left:403.8px;top:292px;">3</div>
<div class="t" style="left:404.3px;top:308px;">4</div>
<div class="t" style="left:432.8px;top:261px;">categories_id</div>
<div class="t" style="left:433.8px;top:277px;letter-spacing:0.10px;">title</div>
<div class="t" style="left:432.8px;top:293px;letter-spacing:-0.07px;">display_order</div>
<div class="t" style="left:432.8px;top:309px;letter-spacing:0.02px;">moderated</div>
<div class="t" style="left:665.9px;top:261px;letter-spacing:-0.60px;">INTEGER</div>
<div class="t" style="left:666.5px;top:277px;letter-spacing:-0.60px;">VARCHAR</div>
<div class="t" style="left:665.9px;top:293px;letter-spacing:-0.60px;">INTEGER</div>
<div class="t" style="left:665.9px;top:309px;letter-spacing:-0.60px;">INTEGER</div>
<div class="t" style="left:807.5px;top:293px;color:#fff;">1</div>
<div class="t" style="left:849.7px;top:293px;letter-spacing:-0.60px;">ASCENDING</div>
<div class="t" style="left:382.0px;top:425px;letter-spacing:-0.17px;">Options</div>
<div class="t" style="left:401.6px;top:445px;letter-spacing:-0.26px;">Allow Reverse Scan</div>
<div class="t" style="left:400.6px;top:461px;letter-spacing:-0.08px;">Clustered</div>
<div class="t" style="left:400.6px;top:477px;letter-spacing:-0.51px;">Min PCT Used</div>
<div class="t" style="left:400.6px;top:493px;letter-spacing:-0.37px;">PCT Free</div>
<div class="t" style="left:400.6px;top:509px;letter-spacing:-0.12px;">Unique</div>
<div class="t" style="left:670.9px;top:477px;letter-spacing:0.60px;">10</div>
<div class="t" style="left:670.9px;top:493px;letter-spacing:0.60px;">10</div>
<div class="t" style="left:844.6px;top:592px;">OK</div>
<div class="t" style="left:916.5px;top:592px;letter-spacing:-0.18px;">Cancel</div>

<!-- balloon -->
<svg style="left:690px;top:300px" width="210" height="160" viewBox="0 0 210 160"><defs><filter id="sh" x="-10%" y="-10%" width="130%" height="130%"><feGaussianBlur stdDeviation="2"/></filter><linearGradient id="gp" x1="0" y1="0" x2="1" y2="0"><stop offset="0" stop-color="#1F8FFF"/><stop offset=".5" stop-color="#9CCBFF"/><stop offset="1" stop-color="#1F8FFF"/></linearGradient></defs>
<path d="M21 60.3 H130.3 L135.5 9 L143.2 60.3 H181.5 Q190.6 60.3 190.6 69.5 V138 Q190.6 147.2 181.5 147.2 H21 Q11.4 147.2 11.4 138 V69.5 Q11.4 60.3 21 60.3Z" transform="translate(4,5)" fill="#000" opacity=".55" filter="url(#sh)"/>
<path d="M21 60.3 H130.3 L135.5 9 L143.2 60.3 H181.5 Q190.6 60.3 190.6 69.5 V138 Q190.6 147.2 181.5 147.2 H21 Q11.4 147.2 11.4 138 V69.5 Q11.4 60.3 21 60.3Z" fill="#1F8FFF"/>
<path d="M131.5 62 L135.5 14 L142 62Z" fill="url(#gp)"/></svg>
<div class="a" style="left:704px;top:362.5px;width:174.5px;height:82.5px;border-radius:7px;background:#fff;box-shadow:inset 0 0 9px 5px #5CADFF,inset 0 0 22px 6px #CDE6FF"></div>
<div class="t" style="left:715.8px;top:373px;letter-spacing:0.19px;font-size:12px;font-weight:bold;transform:scaleX(1.22);color:#140c00;-webkit-text-stroke:0.35px #140c00;">Enter an Index name</div>
<div class="t" style="left:737.5px;top:389px;letter-spacing:0.34px;font-size:12px;font-weight:bold;transform:scaleX(1.22);color:#140c00;-webkit-text-stroke:0.35px #140c00;">and select the</div>
<div class="t" style="left:738.0px;top:405px;letter-spacing:0.29px;font-size:12px;font-weight:bold;transform:scaleX(1.22);color:#140c00;-webkit-text-stroke:0.35px #140c00;">columns to be</div>
<div class="t" style="left:761.2px;top:421px;letter-spacing:0.23px;font-size:12px;font-weight:bold;transform:scaleX(1.22);color:#140c00;-webkit-text-stroke:0.35px #140c00;">indexed</div>

</div>
</body></html>
